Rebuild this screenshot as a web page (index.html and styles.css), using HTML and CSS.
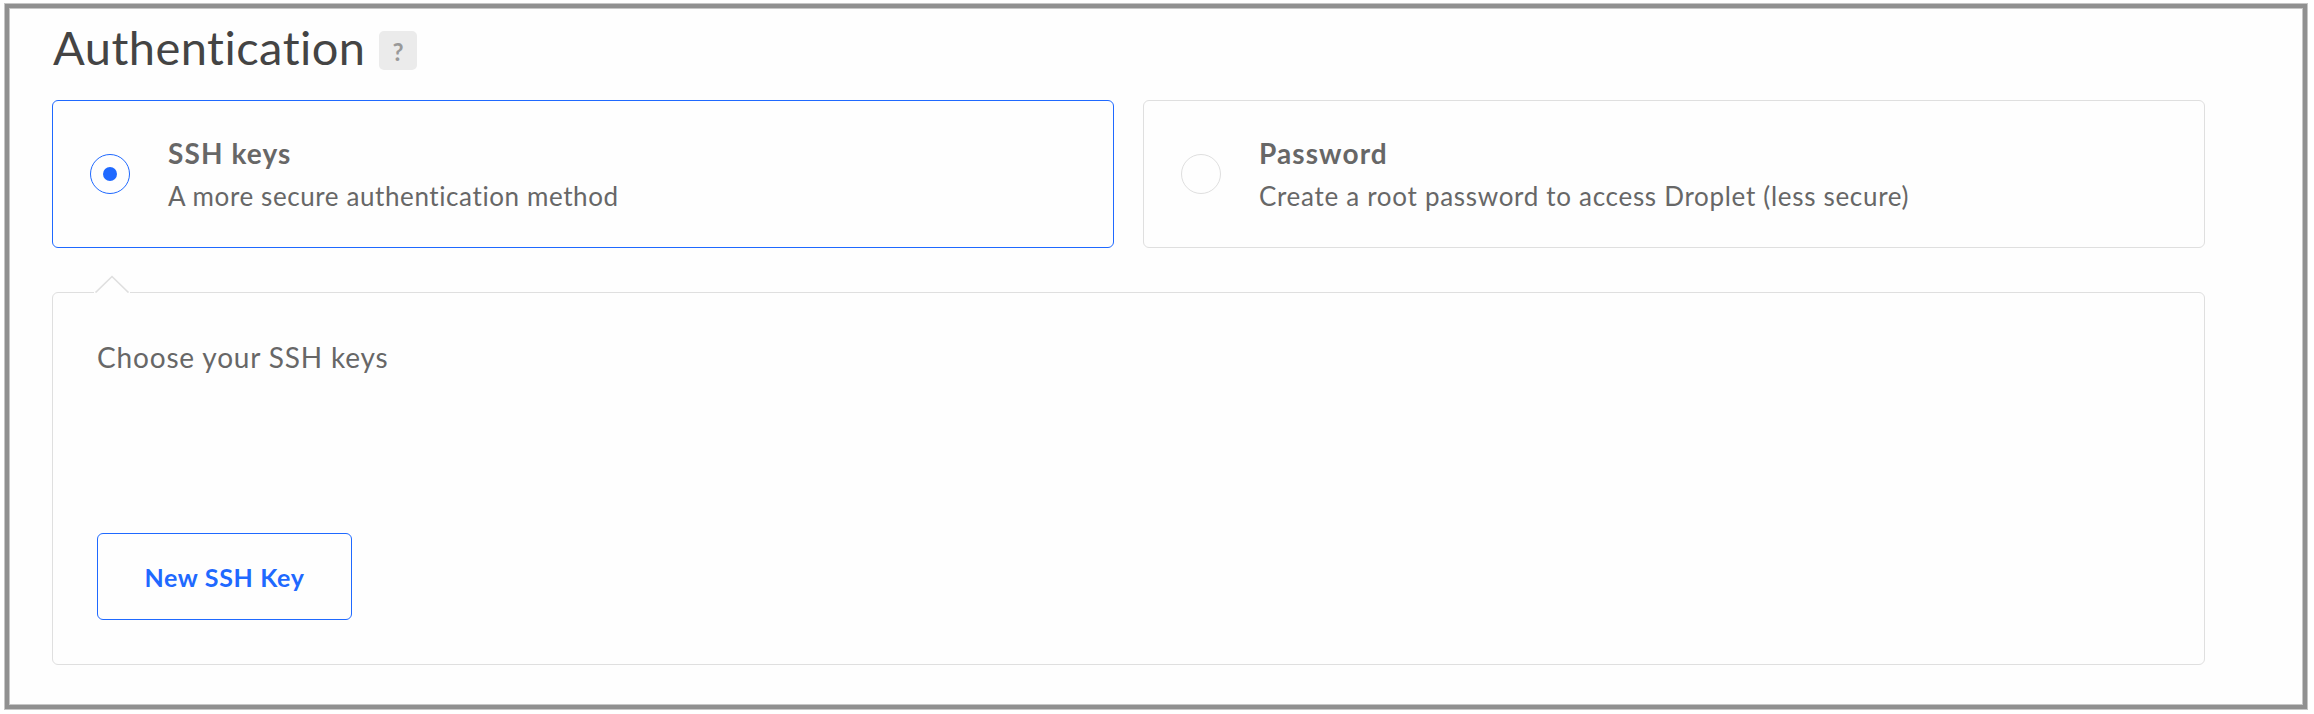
FILE: index.html
```html
<!DOCTYPE html>
<html lang="en">
<head>
<meta charset="utf-8">
<title>Authentication</title>
<link rel="stylesheet" href="styles.css">
</head>
<body>
<main class="frame">
  <div class="frame-inner">
    <header class="heading">
      <h1 class="title">Authentication</h1>
      <button class="help" type="button">?</button>
    </header>
    <div class="options">
      <label class="option option-selected">
        <span class="radio"><span class="radio-dot"></span></span>
        <span class="option-text">
          <strong class="option-name">SSH keys</strong>
          <span class="option-desc desc-ssh">A more secure authentication method</span>
        </span>
      </label>
      <label class="option">
        <span class="radio"></span>
        <span class="option-text">
          <strong class="option-name">Password</strong>
          <span class="option-desc desc-password">Create a root password to access Droplet (less secure)</span>
        </span>
      </label>
    </div>
    <section class="panel">
      <svg class="panel-arrow" width="36" height="18" viewBox="0 0 36 18"><path d="M1.5 17.5 18 1.5 34.5 17.5" fill="none" stroke="#dfdfdf" stroke-width="1.6"/></svg>
      <p class="panel-label">Choose your SSH keys</p>
      <button class="new-key" type="button">New SSH Key</button>
    </section>
  </div>
</main>
</body>
</html>
```
FILE: styles.css
```css
* {
  box-sizing: border-box;
}

body {
  margin: 0;
  height: 714px;
  padding: 3px 6px 4px 4px;
  background: #fff;
  font-family: Lato, "Open Sans", sans-serif;
  font-variant-ligatures: none;
  color: #676767;
  overflow: hidden;
}

.frame {
  height: 707px;
  border: 1px solid #c6c6c6;
  background: #909090;
  padding: 4px;
}

.frame-inner {
  height: 100%;
  border: 1px solid #c6c6c6;
  background: #fefefe;
  padding: 19px 97px 0 42px;
}

.heading {
  display: flex;
  align-items: flex-start;
  height: 72px;
}

.title {
  margin: -9px 0 0;
  padding-left: 1px;
  width: 327px;
  font-size: 47px;
  font-weight: 400;
  line-height: 56px;
  letter-spacing: 0.48px;
  color: #444;
  white-space: nowrap;
}

.help {
  width: 38px;
  height: 39px;
  margin: 3px 0 0;
  padding: 0;
  border: 0;
  border-radius: 5px;
  background: #ebebeb;
  color: #999;
  font: 700 24px/41px Lato, sans-serif;
}

.options {
  display: grid;
  grid-template-columns: 1062px 1062px;
  gap: 29px;
}

.option {
  display: flex;
  align-items: flex-start;
  height: 148px;
  padding: 37px;
  border: 1px solid #dfdfdf;
  border-radius: 6px;
}

.radio {
  display: grid;
  place-items: center;
  width: 40px;
  height: 40px;
  margin: 16px 38px 0 0;
  border: 1px solid #dfdfdf;
  border-radius: 50%;
}

.option-selected,
.option-selected .radio {
  border-color: #1f69ff;
}

.radio-dot {
  width: 14px;
  height: 14px;
  border-radius: 50%;
  background: #1f69ff;
}

.option-text {
  display: flex;
  flex-direction: column;
  margin-top: -1px;
  white-space: nowrap;
}

.option-name {
  font-size: 28px;
  line-height: 32px;
  letter-spacing: 1.1px;
}

.option-desc {
  margin-top: 11px;
  font-size: 26px;
  line-height: 32px;
}

.desc-ssh {
  letter-spacing: 0.6px;
}

.desc-password {
  letter-spacing: 0.7px;
}

.panel {
  position: relative;
  display: flex;
  flex-direction: column;
  align-items: flex-start;
  justify-content: space-between;
  height: 373px;
  margin-top: 44px;
  padding: 47px 44px 44px;
  border: 1px solid #dfdfdf;
  border-radius: 6px;
}

.panel-arrow {
  position: absolute;
  left: 41px;
  top: -18px;
  background: #fefefe;
}

.panel-label {
  margin: 0;
  font-size: 28px;
  line-height: 34px;
  letter-spacing: 0.83px;
}

.new-key {
  width: 255px;
  height: 87px;
  padding: 0;
  border: 1px solid #1f69ff;
  border-radius: 6px;
  background: transparent;
  color: #1f69ff;
  font: 700 25px/34px Lato, sans-serif;
  letter-spacing: 0.65px;
}
```
